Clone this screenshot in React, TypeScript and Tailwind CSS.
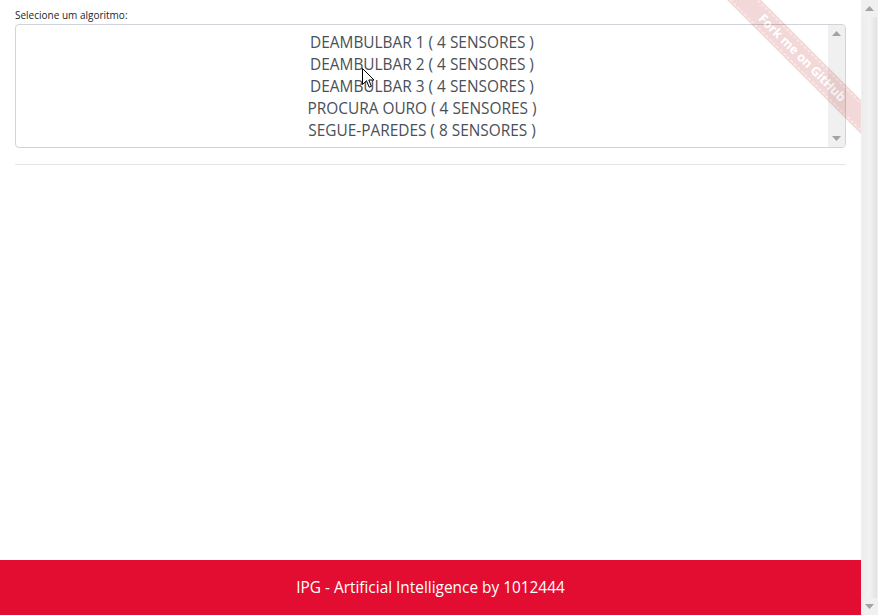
import React from 'react';

const algorithms = [
  'DEAMBULBAR 1 ( 4 SENSORES )',
  'DEAMBULBAR 2 ( 4 SENSORES )',
  'DEAMBULBAR 3 ( 4 SENSORES )',
  'PROCURA OURO ( 4 SENSORES )',
  'SEGUE-PAREDES ( 8 SENSORES )',
];

const font = { fontFamily: '"Open Sans", "Noto Sans", sans-serif' };

function Arrow({ up }: { up?: boolean }) {
  return (
    <svg width="9" height="5" viewBox="0 0 9 5" className="fill-[#a3a3a3]">
      {up ? <path d="M0 5 L4.5 0 L9 5 Z" /> : <path d="M0 0 L4.5 5 L9 0 Z" />}
    </svg>
  );
}

function ForkRibbon() {
  return (
    <div className="pointer-events-none absolute right-0 top-0 h-[149px] w-[149px] overflow-hidden opacity-[0.15]">
      <div className="absolute left-[-22px] top-[46px] flex h-[24px] w-[224px] rotate-45 items-center justify-center bg-[#b00000]">
        <div className="flex h-[20px] w-full items-center justify-center border-y border-dashed border-white/70">
          <span className="text-[12.5px] font-bold text-white" style={font}>
            Fork me on GitHub
          </span>
        </div>
      </div>
    </div>
  );
}

function Cursor() {
  return (
    <svg
      className="pointer-events-none absolute left-[362px] top-[68px]"
      width="13"
      height="21"
      viewBox="0 0 13 21"
    >
      <path
        d="M0.5 0.5 L0.5 16.5 L4.5 12.8 L7.2 19.2 L9.4 18.3 L6.8 12 L12 12 Z"
        fill="#fff"
        stroke="#000"
        strokeWidth="1"
        strokeLinejoin="round"
      />
    </svg>
  );
}

export default function App() {
  return (
    <div className="flex h-[615px] w-[878px] overflow-hidden bg-white" style={font}>
      {/* ── Page ── */}
      <div className="relative flex flex-1 flex-col">
        <div className="flex-1 px-[15px] pt-[8px]">
          <label className="block text-[10px] leading-[14px] text-[#212529]">Selecione um algoritmo:</label>
          <div className="mt-[2px] flex h-[124px] overflow-hidden rounded-[4px] border border-[#ced4da]">
            <ul className="flex-1 pt-[7px] pb-[5px] text-center text-[15.4px] leading-[22px] text-[#495057]">
              {algorithms.map((a) => (
                <li key={a}>{a}</li>
              ))}
            </ul>
            {/* list scrollbar */}
            <div className="flex w-[17px] flex-col items-center justify-between bg-[#f0f0f0] py-[6px]">
              <Arrow up />
              <Arrow />
            </div>
          </div>
          <hr className="mt-[16px] border-t border-[#e5e5e5]" />
        </div>

        <footer className="flex h-[55px] items-center justify-center bg-[#e30c31] text-[15.4px] text-white">
          IPG - Artificial Intelligence by 1012444
        </footer>

        <ForkRibbon />
        <Cursor />
      </div>

      {/* ── Window scrollbar ── */}
      <div className="flex w-[17px] flex-col items-center bg-[#f0f0f0]">
        <div className="flex h-[17px] items-center">
          <Arrow up />
        </div>
        <div className="w-[15px] flex-1 bg-gradient-to-r from-[#ececec] via-[#f2f2f2] to-[#e2e2e2]" />
        <div className="flex h-[17px] items-center">
          <Arrow />
        </div>
      </div>
    </div>
  );
}
